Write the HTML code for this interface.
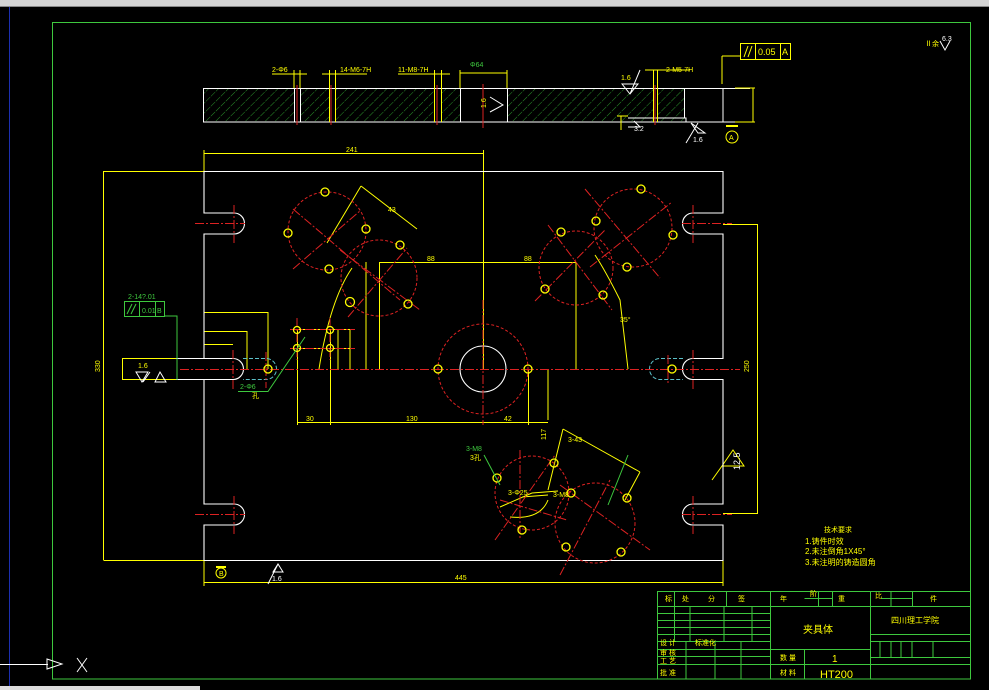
<!DOCTYPE html>
<html><head><meta charset="utf-8"><style>
html,body{margin:0;padding:0;background:#000;width:989px;height:690px;overflow:hidden}
svg{display:block}
text{font-family:"Liberation Sans","Noto Sans CJK SC",sans-serif;font-size:7px;fill:#ff0}
</style></head><body>
<svg width="989" height="690" viewBox="0 0 989 690" xmlns="http://www.w3.org/2000/svg">
<defs>
<pattern id="h" width="7" height="7" patternUnits="userSpaceOnUse" patternTransform="rotate(45)">
<line x1="0" y1="0" x2="0" y2="7" stroke="#2e9e2e" stroke-width="0.9" stroke-dasharray="3 1"/>
</pattern>
</defs>
<rect width="989" height="690" fill="#000"/>
<!-- top gray bar -->
<rect x="0" y="0" width="989" height="6" fill="#d4d4d4"/>
<rect x="0" y="6" width="989" height="1" fill="#888"/>
<!-- blue line -->
<line x1="9.5" y1="7" x2="9.5" y2="690" stroke="#1c2fb0" stroke-width="1"/>
<!-- green frame -->
<rect x="52.5" y="22.5" width="918" height="656.5" fill="none" stroke="#3ec83e" stroke-width="1"/>
<!-- bottom strip -->
<rect x="0" y="686" width="200" height="4" fill="#ddd"/>
<!-- UCS icon -->
<line x1="0" y1="664.5" x2="48" y2="664.5" stroke="#fff"/>
<path d="M47 659 L62 664 L47 669 Z" fill="none" stroke="#fff"/>
<path d="M77 658 L87 672 M87 658 L77 672" stroke="#fff"/>

<!-- SECTION VIEW -->
<rect x="203.5" y="88.5" width="481" height="33.5" fill="url(#h)"/>
<rect x="294" y="88" width="6" height="34" fill="#000"/>
<rect x="329" y="88" width="6" height="34" fill="#000"/>
<rect x="434" y="88" width="8" height="34" fill="#000"/>
<rect x="460" y="88" width="47" height="34" fill="#000"/>
<rect x="653" y="88" width="4" height="34" fill="#000"/>
<g stroke="#fff" fill="none" stroke-width="1">
<path d="M203.5 88.5 H723 V122 H203.5 Z M723 88.5 H750 M723 122 H750"/>
<path d="M294.5 88 V122 M300.5 88 V122 M460.5 88 V122 M507.5 88 V122 M684.5 88 V118 M628 118 H686 V122"/>
</g>
<g stroke="#ff0" stroke-width="1">
<path d="M329.5 70 V122 M335.5 70 V122 M434.5 70 V122 M441.5 70 V122 M653.5 70 V122 M657.5 70 V122 M294 70 V88 M300 70 V88"/>
<path d="M272 74 H307 M322 74 H367 M398 74 H450 M460 73 H507 M460 70 V88 M507 70 V88 M645 70 H690"/>
<path d="M722 56 V84 M722 56 H740 M735 122 H755 M735 88 H755 M753 88 V122"/>
<path d="M621 116 V130 M617 116 H628"/>
</g>
<g stroke="#d22" stroke-width="1">
<path d="M297 85 V125 M331 85 V125 M437 85 V125 M483 84 V128 M655 85 V125"/>
</g>
<text x="272" y="72">2-Φ6</text><text x="340" y="72">14-M6-7H</text><text x="398" y="72">11-M8-7H</text>
<text x="470" y="67" style="fill:#3ec83e">Φ64</text><text x="666" y="72">2-M5-7H</text>
<text x="486" y="108" transform="rotate(-90 486 108)">1.6</text>
<path d="M490 97 L503 105 L490 112" stroke="#fff" fill="none"/>
<path d="M622 84 L630 94 L638 84 Z M640 70 L630 94" stroke="#fff" fill="none"/>
<text x="621" y="80" style="fill:#ff0">1.6</text>
<path d="M691 123 L698 133 L705 133 Z M686 143 L698 123" stroke="#fff" fill="none"/>
<text x="693" y="142" style="fill:#fff">1.6</text>
<path d="M634 121 L640 127 L628 127" stroke="#fff" fill="none"/><text x="634" y="131" style="fill:#fff">3.2</text>
<rect x="726" y="125" width="12" height="2" fill="#ff0"/><circle cx="732" cy="137" r="6" fill="none" stroke="#ff0"/><text x="729" y="140">A</text>
<rect x="740.5" y="43.5" width="50" height="16" fill="none" stroke="#ff0"/>
<path d="M755.5 43.5 V59.5 M780.5 43.5 V59.5 M744 57 L748 46 M748 57 L752 46" stroke="#ff0"/>
<text x="758" y="55" style="font-size:9px">0.05</text><text x="782" y="55" style="font-size:9px">A</text>
<text x="925" y="46">Ⅱ余</text><text x="942" y="41" style="fill:#fff">6.3</text>
<path d="M940 41 L945 50 L950 41" stroke="#fff" fill="none"/>

<!-- MAIN PLATE -->
<g stroke="#ff0" fill="none" stroke-width="1">
<path d="M103.5 171.5 H204 M103.5 171 V560 M103.5 560.5 H204"/>
<path d="M204 150 V171 M483.5 150 V369 M204 153.5 H483"/>
<path d="M204 560 V586 M723 560 V586 M204 582.5 H723"/>
<path d="M723 224.5 H758 M757.5 224 V513 M723 513.5 H758"/>
<path d="M379.5 262.5 H576 M379.5 262 V369 M576 262 V369 M366 262 V369"/>
<path d="M297.5 330 V425 M330.5 330 V425 M528.5 369 V425 M297 422.5 H548 M548 420 V369"/>
<path d="M122.5 358 V380 M122 358.5 H176 M122 379.5 H176"/>
<path d="M204 312.5 H268 M268 312 V369 M204 331.5 H247 M247 331 V369 M204 344.5 H233"/>
<path d="M296 329.5 H355 M296 348.5 H355 M350 329 V369 M338 329 V369"/>
<path d="M361 186 L417 229 M327 243 L361 186"/>
<path d="M319 369 Q330 300 352 268 M628 369 L620 300 Q605 270 595 255"/>
<path d="M563 429 L640 472 M563 429 L548 490 M640 472 L625 500"/>
<path d="M522 497 L548 495 M500 507 L532 493 M532 493 L558 491"/>
<path d="M510 517 Q540 520 548 500"/>
<path d="M722 466 L733 450 L744 466 Z M722 466 L712 480"/>
</g>
<g stroke="#fff" fill="none" stroke-width="1.1">
<path d="M204 171.5 H723 V213 H693 A10.5 10.5 0 0 0 693 234 H723 V358.5 H693 A10.5 10.5 0 0 0 693 379.5 H723 V504 H693 A10.5 10.5 0 0 0 693 525 H723 V560.5 H204 V525 H234 A10.5 10.5 0 0 0 234 504 H204 V379.5 H233 A10.5 10.5 0 0 0 233 358.5 H204 V234 H234 A10.5 10.5 0 0 0 234 213 H204 Z"/>
<path d="M176 358.5 H204 M176 379.5 H204"/>
<circle cx="483" cy="369" r="23"/>
</g>
<g stroke="#5bc0c8" fill="none" stroke-dasharray="4 2">
<path d="M243 358.5 H266 A10.5 10.5 0 0 1 266 379.5 H243"/>
<path d="M683 358.5 H660 A10.5 10.5 0 0 0 660 379.5 H683"/>
</g>
<!-- red centerlines and circles -->
<g stroke="#d22" fill="none" stroke-width="1" stroke-dasharray="9 2 2 2">
<path d="M180 369.5 H740 M483 300 V425"/>
<path d="M195 223.5 H245 M195 514.5 H245 M682 223.5 H732 M682 514.5 H732"/>
<path d="M234 205 V243 M234 496 V534 M693 205 V243 M693 496 V534 M233 350 V390 M266 352 V388 M693 350 V390 M668 355 V385"/>
<path d="M290 329.5 H355 M290 348.5 H355 M297 318 V360 M330 318 V360"/>
<path d="M293 269 L361 210 M293 209 L400 300 M348 317 L407 248 M340 250 L420 310"/>
<path d="M585 189 L660 278 M590 267 L672 202 M535 301 L605 230 M548 225 L612 310"/>
<path d="M495 540 L555 455 M500 500 L567 520 M560 575 L610 480 M560 485 L650 550 M520 450 L520 540"/>
</g>
<g stroke="#d22" fill="none" stroke-width="1" stroke-dasharray="3 2">
<circle cx="327" cy="231" r="39"/>
<circle cx="379" cy="278" r="38"/>
<circle cx="633" cy="228" r="39"/>
<circle cx="576" cy="268" r="37"/>
<circle cx="483" cy="369" r="45"/>
<circle cx="532" cy="493" r="37"/>
<circle cx="595" cy="523" r="40"/>
</g>
<!-- holes -->
<g stroke="#ff0" fill="none" stroke-width="1.3">
<circle cx="325" cy="192" r="4"/><circle cx="288" cy="233" r="4"/><circle cx="366" cy="229" r="4"/><circle cx="329" cy="269" r="4"/>
<circle cx="400" cy="245" r="4"/><circle cx="350" cy="302" r="4.5"/><circle cx="408" cy="304" r="4"/>
<circle cx="641" cy="189" r="4"/><circle cx="596" cy="221" r="4"/><circle cx="673" cy="235" r="4"/><circle cx="627" cy="267" r="4"/>
<circle cx="561" cy="232" r="4"/><circle cx="545" cy="289" r="4"/><circle cx="603" cy="295" r="4"/>
<circle cx="438" cy="369" r="4"/><circle cx="528" cy="369" r="4"/><circle cx="268" cy="369" r="4"/><circle cx="672" cy="369" r="4"/>
<circle cx="297" cy="330" r="3.5"/><circle cx="330" cy="330" r="3.5"/><circle cx="297" cy="348" r="3.5"/><circle cx="330" cy="348" r="3.5"/>
<circle cx="497" cy="478" r="4"/><circle cx="554" cy="463" r="4"/><circle cx="571" cy="493" r="4"/><circle cx="522" cy="530" r="4"/>
<circle cx="566" cy="547" r="4"/><circle cx="621" cy="552" r="4"/><circle cx="627" cy="498" r="4"/>
</g>
<!-- green annotations -->
<g stroke="#3ec83e" fill="none" stroke-width="1">
<rect x="124.5" y="301.5" width="40" height="15"/>
<path d="M139.5 301.5 V316.5 M155.5 301.5 V316.5 M164 316 H177 V380 M127 314 L132 304 M131 314 L136 304"/>
<path d="M238 391.5 H268 L305 337"/>
<path d="M484 455 L500 485 M628 455 L608 505"/>
</g>
<text x="128" y="299" style="fill:#3ec83e">2-14?.01</text>
<text x="142" y="313" style="fill:#3ec83e">0.01</text><text x="157" y="313" style="fill:#3ec83e">B</text>
<text x="240" y="389" style="fill:#3ec83e">2-Φ6</text><text x="252" y="398">孔</text>
<text x="466" y="451" style="fill:#3ec83e">3-M8</text><text x="470" y="460">3孔</text>
<g stroke="#fff" fill="none"><path d="M136 372 L142 382 L148 372 Z M150 372 L143 382 M155 382 L160 372 L166 382 Z"/></g>
<text x="138" y="368" style="fill:#ff0">1.6</text>
<text x="346" y="152">241</text><text x="427" y="261">88</text><text x="524" y="261">88</text>
<text x="306" y="421">30</text><text x="406" y="421">130</text><text x="504" y="421">42</text>
<text x="455" y="580">445</text><text x="388" y="212">43</text><text x="568" y="442">3-43</text>
<text x="749" y="372" transform="rotate(-90 749 372)">250</text>
<text x="100" y="372" transform="rotate(-90 100 372)">330</text>
<text x="740" y="470" transform="rotate(-90 740 470)" style="fill:#fff;font-size:9px">12.5</text>
<text x="620" y="322">35°</text><text x="546" y="440" transform="rotate(-90 546 440)">117</text>
<text x="508" y="495">3-Φ25</text><text x="553" y="497">3-M8</text>
<rect x="216" y="566" width="10" height="2" fill="#ff0"/><circle cx="221" cy="573" r="5" fill="none" stroke="#ff0"/><text x="219" y="576">B</text>
<path d="M273 572 L278 564 L283 572 Z M268 584 L278 564" stroke="#fff" fill="none"/><text x="272" y="581" style="fill:#fff">1.6</text>
<!-- notes -->
<text x="824" y="532">技术要求</text>
<text x="805" y="544" style="font-size:8px">1.铸件时效</text>
<text x="805" y="554" style="font-size:8px">2.未注倒角1X45°</text>
<text x="805" y="565" style="font-size:8px">3.未注明的铸造圆角</text>

<!-- TITLE BLOCK -->
<g stroke="#3ec83e" fill="none" stroke-width="1">
<rect x="657.5" y="591.5" width="313" height="87.5"/>
<path d="M657.5 606.5 H971 M657.5 641.5 H770 M870 634.5 H971 M870 641.5 H971 M770 649.5 H870 M770 664.5 H870 M870 664.5 H971 M870 657.5 H971"/>
<path d="M657.5 613.5 H770 M657.5 620.5 H770 M657.5 627.5 H770 M657.5 634.5 H770 M657.5 649.5 H770 M657.5 656.5 H770 M657.5 664.5 H770"/>
<path d="M674.5 591.5 V641 M726.5 591.5 V606 M770.5 591.5 V679 M804.5 649 V679 M832.5 591.5 V606 M870.5 591.5 V679 M912.5 591.5 V606 M804.5 598.5 H832 M818.5 591.5 V606"/>
<path d="M690 606.5 V641 M724 606.5 V641 M752 606.5 V641 M686 641.5 V679 M715 641.5 V679 M741 641.5 V679"/>
<path d="M880 641.5 V657 M891 641.5 V657 M901 641.5 V657 M912 641.5 V657 M933 641.5 V657 M891 591.5 V606 M881 598.5 H912"/>
</g>
<text x="803" y="633" style="font-size:10px">夹具体</text>
<text x="891" y="623" style="font-size:8px">四川理工学院</text>
<text x="832" y="662" style="font-size:10px">1</text>
<text x="820" y="678" style="font-size:11px">HT200</text>
<g style="font-size:5px">
<text x="665" y="601">标</text><text x="682" y="601">处</text><text x="708" y="601">分</text><text x="738" y="601">签</text><text x="780" y="601">年</text><text x="810" y="596">阶</text><text x="838" y="601">重</text><text x="875" y="598">比</text><text x="930" y="601">件</text>
<text x="660" y="645">设 计</text><text x="695" y="645">标准化</text><text x="660" y="655">审 核</text><text x="660" y="663">工 艺</text><text x="660" y="675">批 准</text>
<text x="780" y="660">数 量</text><text x="780" y="675">材 料</text>
</g>
</svg>
</body></html>
